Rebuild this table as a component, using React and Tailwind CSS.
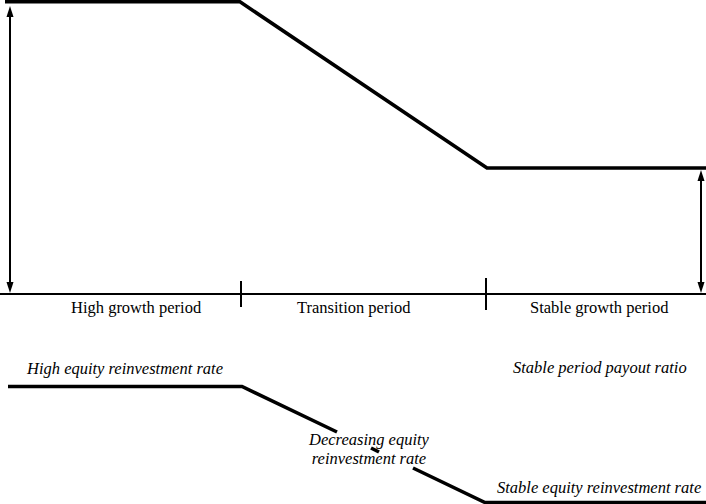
export default function App() {
  const serif = { fontFamily: '"Liberation Serif", "Times New Roman", serif' };

  return (
    <div className="relative w-[706px] h-[504px] bg-white overflow-hidden text-black" style={serif}>
      <svg className="absolute inset-0" width="706" height="504" viewBox="0 0 706 504">
        {/* payout ratio path */}
        <polyline points="5,1.8 240,1.8 487,168 706,168" fill="none" stroke="#000" strokeWidth="3.6" strokeLinejoin="miter" />

        {/* time axis */}
        <line x1="0" y1="294" x2="706" y2="294" stroke="#000" strokeWidth="2" />
        <line x1="241" y1="281" x2="241" y2="307" stroke="#000" strokeWidth="2" />
        <line x1="486" y1="278" x2="486" y2="310" stroke="#000" strokeWidth="2" />

        {/* left double arrow */}
        <line x1="10" y1="14" x2="10" y2="286" stroke="#000" strokeWidth="2" />
        <polygon points="10,6 6.5,17 13.5,17" fill="#000" />
        <polygon points="10,293 6.5,282 13.5,282" fill="#000" />

        {/* right double arrow */}
        <line x1="701" y1="178" x2="701" y2="285" stroke="#000" strokeWidth="2" />
        <polygon points="701,170 697.5,181 704.5,181" fill="#000" />
        <polygon points="701,293 697.5,282 704.5,282" fill="#000" />

        {/* reinvestment rate path */}
        <polyline points="8,386.5 242,386.5 337,432" fill="none" stroke="#000" strokeWidth="3.6" />
        <line x1="371" y1="448" x2="379" y2="452" stroke="#000" strokeWidth="3.6" />
        <polyline points="413,468 485,502.5 706,502.5" fill="none" stroke="#000" strokeWidth="3.6" />
      </svg>

      <span className="absolute left-[71px] top-[300px] text-[16.5px] leading-4 whitespace-nowrap">High growth period</span>
      <span className="absolute left-[297px] top-[300px] text-[16.5px] leading-4 whitespace-nowrap">Transition period</span>
      <span className="absolute left-[530px] top-[300px] text-[16.5px] leading-4 whitespace-nowrap">Stable growth period</span>

      <span className="absolute left-[27px] top-[361px] text-[16.5px] leading-4 italic whitespace-nowrap">High equity reinvestment rate</span>
      <span className="absolute left-[513px] top-[360px] text-[16.5px] leading-4 italic whitespace-nowrap">Stable period payout ratio</span>

      <div className="absolute left-[299px] top-[430px] w-[140px] flex flex-col items-center text-[16.5px] leading-[19px] italic">
        <span className="whitespace-nowrap">Decreasing equity</span>
        <span className="whitespace-nowrap">reinvestment rate</span>
      </div>

      <span className="absolute left-[497px] top-[480px] text-[16.5px] leading-4 italic whitespace-nowrap">Stable equity reinvestment rate</span>
    </div>
  );
}
